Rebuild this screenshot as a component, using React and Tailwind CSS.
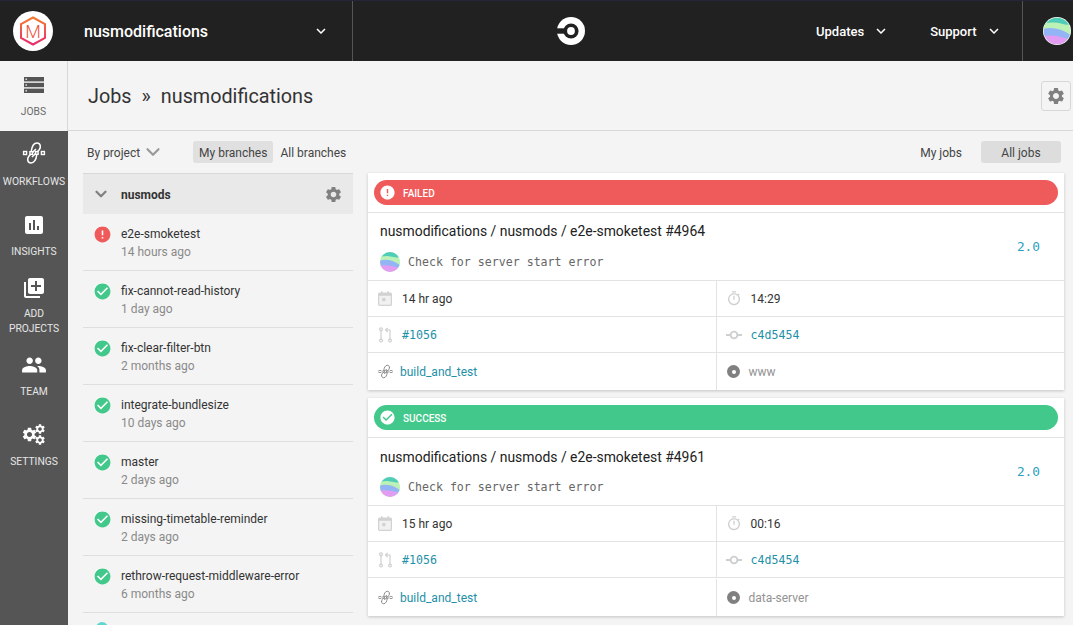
import React from "react";
import { ChevronDown } from "lucide-react";
import { MdAssessment, MdLibraryAdd, MdPeople, MdSettings, MdCheckCircle, MdError, MdKeyboardArrowDown, MdOutlineTimer } from "react-icons/md";

function Avatar({ size, id, ring }) {
  return (
    <svg width={size} height={size} viewBox="0 0 40 40" className="shrink-0">
      <defs>
        <clipPath id={id}><circle cx="20" cy="20" r={ring ? 19 : 20} /></clipPath>
      </defs>
      {ring ? <circle cx="20" cy="20" r="20" fill="#fff" /> : null}
      <g clipPath={`url(#${id})`}>
        <rect width="40" height="40" fill="#bdf2b6" />
        <rect width="40" height="11" fill="#4fcdb8" />
        <path d="M0 10 Q20 4 40 15 L40 26 Q20 16 0 20Z" fill="#bdf2b6" />
        <path d="M0 17 Q20 12 40 26 L40 34 Q20 26 0 28Z" fill="#93b4f5" />
        <path d="M0 27 Q20 24 40 33 L40 40 L0 40Z" fill="#e29df2" />
      </g>
    </svg>
  );
}

function WorkflowIcon({ size = 24, color = "#fff", bg = "#555" }) {
  return (
    <svg width={size} height={size} viewBox="0 0 24 24" fill="none" stroke={color} strokeWidth="1.6">
      <path d="M9.2 10.5 C9.8 6 11.5 2 15 2 C18.6 2 19.2 6.2 17.2 8.8 L10 16" />
      <path d="M14.8 13.5 C14.2 18 12.5 22 9 22 C5.4 22 4.8 17.8 6.8 15.2 L14 8" />
      <g fill={bg} strokeWidth="1.4">
        <rect x="1.6" y="10.5" width="3" height="3" />
        <rect x="19.4" y="10.5" width="3" height="3" />
        <rect x="7.9" y="10.7" width="2.6" height="2.6" />
        <rect x="13.5" y="10.7" width="2.6" height="2.6" />
      </g>
    </svg>
  );
}

function NavItem({ icon, label, label2, active, iconClass = "", labelClass = "mt-[7px]" }) {
  return (
    <div className={`h-[70px] flex flex-col items-center justify-center shrink-0 ${active ? "bg-[#f4f4f4] text-[#6a6a6a] border-r border-[#d8d8d8]" : "text-[#e6e6e6]"}`}>
      <div className={`h-6 flex items-center justify-center ${iconClass}`}>{icon}</div>
      <div className={`text-[10.3px] leading-[15px] text-center ${labelClass}`}>{label}{label2 ? <><br />{label2}</> : null}</div>
    </div>
  );
}

function SettingsIcon() {
  return (
    <div className="relative w-6 h-6">
      <MdSettings size={17} className="absolute left-[-1px] top-[3px] text-white" />
      <MdSettings size={12} className="absolute left-[12px] top-[0px] text-white" />
      <MdSettings size={12} className="absolute left-[12px] top-[11px] text-white" />
    </div>
  );
}

function JobsIcon() {
  return (
    <svg width="22" height="18" viewBox="0 0 22 18">
      <g fill="#555">
        <rect x="1" y="1" width="20" height="4.4" />
        <rect x="1" y="6.8" width="20" height="4.4" />
        <rect x="1" y="12.6" width="20" height="4.4" />
      </g>
      <g fill="#f4f4f4">
        <rect x="2.5" y="2.5" width="1.4" height="1.4" />
        <rect x="2.5" y="8.3" width="1.4" height="1.4" />
        <rect x="2.5" y="14.1" width="1.4" height="1.4" />
      </g>
    </svg>
  );
}

function Sidebar() {
  return (
    <div className="w-[68px] shrink-0 bg-[#555555] flex flex-col">
      <NavItem active icon={<JobsIcon />} label="JOBS" />
      <NavItem icon={<WorkflowIcon size={24} />} iconClass="-mt-[2px] mb-[2px]" label="WORKFLOWS" />
      <NavItem icon={<MdAssessment size={24} className="text-white" />} label="INSIGHTS" />
      <NavItem icon={<MdLibraryAdd size={24} className="text-white" />} label="ADD" label2="PROJECTS" labelClass="mt-[6px]" />
      <NavItem icon={<MdPeople size={26} className="text-white -ml-px" />} label="TEAM" />
      <NavItem icon={<SettingsIcon />} label="SETTINGS" />
    </div>
  );
}

function Logo() {
  return (
    <div className="w-10 h-10 rounded-full bg-white flex items-center justify-center shrink-0">
      <svg width="28" height="30" viewBox="0 0 28 30">
        <defs>
          <linearGradient id="lg" x1="0" y1="0" x2="0" y2="1">
            <stop offset="0" stopColor="#f47c30" />
            <stop offset="1" stopColor="#ea2a6a" />
          </linearGradient>
        </defs>
        <path d="M14 1.5 L26 8 V22 L14 28.5 L2 22 V8 Z" fill="none" stroke="url(#lg)" strokeWidth="2" />
        <text x="14" y="21.5" textAnchor="middle" fontFamily="Roboto" fontWeight="300" fontSize="18" fill="#f0503a">M</text>
      </svg>
    </div>
  );
}

function CircleCI() {
  return (
    <svg width="28" height="28" viewBox="0 0 28 28">
      <circle cx="14" cy="14" r="14" fill="#fff" />
      <circle cx="14" cy="14" r="7.6" fill="#212121" />
      <rect x="0" y="11.3" width="14" height="5.4" fill="#212121" />
      <circle cx="14" cy="14" r="3.9" fill="#fff" />
    </svg>
  );
}

function Header() {
  return (
    <div className="h-[61px] shrink-0 bg-[#212121] border-t border-[#26263a] flex text-white">
      <div className="w-[353px] shrink-0 flex items-center border-r border-[#555] pl-[13px] pr-[22px]">
        <Logo />
        <span className="ml-[31px] pt-px text-[16px] font-medium">nusmodifications</span>
        <MdKeyboardArrowDown size={18} className="ml-auto" />
      </div>
      <div className="w-[436px] shrink-0 flex items-center justify-center"><CircleCI /></div>
      <div className="flex-1 flex items-center text-[13px] font-medium">
        <span className="ml-[27px] pt-px">Updates</span>
        <MdKeyboardArrowDown size={18} className="ml-[8px]" />
        <span className="ml-[40px] pt-px">Support</span>
        <MdKeyboardArrowDown size={18} className="ml-[9px]" />
        <div className="ml-auto w-[51px] h-full border-l border-[#555] flex items-center pl-[20px]">
          <Avatar size={28} id="hdr" ring />
        </div>
      </div>
    </div>
  );
}

function Row({ status, name, time }) {
  return (
    <div className="h-[57px] flex border-b border-[#dedede] pl-[11px] shrink-0">
      <div className="w-[16px] h-[16px] mt-[12px] rounded-full bg-white flex items-center justify-center shrink-0">
        {status === "fail" ? <MdError size={19} className="text-[#ef5b5b] shrink-0" /> : <MdCheckCircle size={19} className="text-[#42c88a] shrink-0" />}
      </div>
      <div className="ml-[11px] pt-[11px]">
        <div className="text-[12px] leading-[18px] text-[#333]">{name}</div>
        <div className="text-[12px] leading-[18px] text-[#8a8a8a]">{time}</div>
      </div>
    </div>
  );
}

function PrIcon() {
  return (
    <svg width="13" height="16" viewBox="0 0 13 16" fill="none" stroke="#cfcfcf" strokeWidth="1.2">
      <circle cx="2" cy="2.2" r="1.4" />
      <circle cx="2" cy="13.6" r="1.4" />
      <circle cx="11" cy="13.6" r="1.4" />
      <path d="M2 3.6V12.2M11 12.2V3H7M8.6 1L6.6 3L8.6 5" />
    </svg>
  );
}

function CommitIcon() {
  return (
    <svg width="16" height="10" viewBox="0 0 16 10" fill="none" stroke="#cfcfcf" strokeWidth="1.9">
      <circle cx="8" cy="5" r="3.4" />
      <path d="M0 5h4.6M11.4 5H16" />
    </svg>
  );
}

function CalendarIcon() {
  return (
    <svg width="14" height="15" viewBox="0 0 14 15">
      <rect x="0.6" y="2.2" width="12.8" height="12.2" rx="1" fill="#f1f1f1" stroke="#d2d2d2" strokeWidth="1.2" />
      <rect x="0.6" y="2.2" width="12.8" height="2.6" fill="#d2d2d2" />
      <rect x="3" y="0.3" width="1.6" height="2.4" fill="#d2d2d2" />
      <rect x="9.4" y="0.3" width="1.6" height="2.4" fill="#d2d2d2" />
      <rect x="4.2" y="7" width="3.2" height="3.2" fill="#d2d2d2" />
    </svg>
  );
}

function Cell({ icon, children }) {
  return (
    <div className="flex-1 flex items-center h-full pl-[9px]">
      <div className="w-[16px] flex items-center justify-center shrink-0">{icon}</div>
      {children}
    </div>
  );
}

function Card({ status, num, time, dur, branchTag, id, second }) {
  const failed = status === "fail";
  return (
    <div className={`bg-white shadow-[0_1px_3px_rgba(0,0,0,0.2)] ${second ? "mt-[8px]" : ""}`}>
      <div className="h-[40px] border-b border-[#e3e3e3] px-[6px] pt-[7px]">
        <div className={`h-[25px] rounded-full flex items-center pl-[5px] text-white ${failed ? "bg-[#ef5b5b]" : "bg-[#42c88a]"}`}>
          {failed ? <MdError size={17} /> : <MdCheckCircle size={17} />}
          <span className="ml-[7px] pt-[2px] text-[10px] font-medium">{failed ? "FAILED" : "SUCCESS"}</span>
        </div>
      </div>
      <div className={`h-[68px] border-b border-[#e3e3e3] relative pl-[12px] ${second ? "pt-[9px]" : "pt-[8px]"}`}>
        <div className="text-[13.92px] leading-[20px] text-[#212121]">nusmodifications / nusmods / e2e-smoketest #{num}</div>
        <div className={`flex items-center ${second ? "mt-[10px]" : "mt-[11px]"}`}>
          <Avatar size={20} id={id} />
          <span className="ml-[8px] pt-[2px] text-[11.6px] text-[#666] font-['DejaVu_Sans_Mono',monospace]">Check for server start error</span>
        </div>
        <span className="absolute right-[24px] top-[24px] text-[12.8px] text-[#2a9fc0] font-['DejaVu_Sans_Mono',monospace]">2.0</span>
      </div>
      <div className="h-[36px] flex border-b border-[#e3e3e3]">
        <Cell icon={<CalendarIcon />}><span className="ml-[9px] text-[12px] text-[#333]">{time}</span></Cell>
        <div className="w-px bg-[#e3e3e3]" />
        <Cell icon={<MdOutlineTimer size={17} className="text-[#cfcfcf]" />}><span className="ml-[9px] text-[12px] text-[#333]">{dur}</span></Cell>
      </div>
      <div className="h-[36px] flex border-b border-[#e3e3e3]">
        <Cell icon={<PrIcon />}><span className="ml-[9px] pt-[2px] text-[11.6px] text-[#1e90a8] font-['DejaVu_Sans_Mono',monospace]">#1056</span></Cell>
        <div className="w-px bg-[#e3e3e3]" />
        <Cell icon={<CommitIcon />}><span className="ml-[9px] pt-[2px] text-[11.6px] text-[#1e90a8] font-['DejaVu_Sans_Mono',monospace]">c4d5454</span></Cell>
      </div>
      <div className={`flex ${second ? "h-[38px] pt-px" : "h-[37px]"}`}>
        <Cell icon={<WorkflowIcon size={15} color="#888" bg="#fff" />}><span className="ml-[7px] text-[12px] text-[#1e90a8]">build_and_test</span></Cell>
        <div className="w-px bg-[#e3e3e3]" />
        <Cell icon={<div className="w-[13px] h-[13px] rounded-full bg-[#808080] flex items-center justify-center"><div className="w-1 h-1 rounded-full bg-white" /></div>}>
          <span className="ml-[7px] text-[12px] text-[#929292]">{branchTag}</span>
        </Cell>
      </div>
    </div>
  );
}

export default function App() {
  return (
    <div className="w-[1073px] h-[625px] overflow-hidden flex flex-col bg-[#f4f4f4] font-['Roboto',sans-serif]">
      <Header />
      <div className="flex-1 flex min-h-0">
        <Sidebar />
        <div className="flex-1 min-w-0 flex flex-col">
          <div className="h-[70px] shrink-0 border-b border-[#d8d8d8] flex items-center pl-[20px] pr-[2px] justify-between">
            <div className="text-[19.8px] text-[#333] pt-[2px]">Jobs<span className="mx-[10px]">»</span>nusmodifications</div>
            <div className="w-[30px] h-[30px] border border-[#d8d8d8] rounded-[3px] flex items-center justify-center"><MdSettings size={20} className="text-[#808080]" /></div>
          </div>
          <div className="flex-1 min-h-0 flex pl-[15px]">
            <div className="w-[270px] shrink-0 flex flex-col">
              <div className="h-[42px] shrink-0 flex items-center text-[12px] text-[#444]">
                <span className="ml-[4px] pt-px">By project</span>
                <ChevronDown size={22} strokeWidth={2.4} className="ml-[2px] text-[#999]" />
                <span className="ml-[29px] h-[22px] pt-px px-[6px] rounded-[3px] bg-[#e0e0e0] flex items-center">My branches</span>
                <span className="ml-[7px] pt-px">All branches</span>
              </div>
              <div className="h-[41px] shrink-0 bg-[#e9e9e9] border-t border-[#d8d8d8] flex items-center pl-[9px] pr-[10px]">
                <ChevronDown size={18} strokeWidth={3} className="text-[#808080]" />
                <span className="ml-[11px] pt-px text-[12px] font-bold text-[#333]">nusmods</span>
                <MdSettings size={19} className="ml-auto text-[#808080]" />
              </div>
              <Row status="fail" name="e2e-smoketest" time="14 hours ago" />
              <Row name="fix-cannot-read-history" time="1 day ago" />
              <Row name="fix-clear-filter-btn" time="2 months ago" />
              <Row name="integrate-bundlesize" time="10 days ago" />
              <Row name="master" time="2 days ago" />
              <Row name="missing-timetable-reminder" time="2 days ago" />
              <Row name="rethrow-request-middleware-error" time="6 months ago" />
              <div className="relative h-4"><div className="absolute left-[13px] top-[9px] w-[12px] h-[12px] rounded-full bg-[#5fd6d0]" /></div>
            </div>
            <div className="ml-[15px] w-[696px] shrink-0 flex flex-col">
              <div className="h-[42px] shrink-0 flex items-center justify-end pr-[3px] text-[12px] text-[#444]">
                <span className="pt-px">My jobs</span>
                <span className="ml-[19px] w-[80px] h-[22px] pt-px rounded-[3px] bg-[#dddddd] flex items-center justify-center">All jobs</span>
              </div>
              <Card status="fail" id="a1" num="4964" time="14 hr ago" dur="14:29" branchTag="www" />
              <Card status="ok" id="a2" num="4961" time="15 hr ago" dur="00:16" branchTag="data-server" second />
            </div>
          </div>
        </div>
      </div>
    </div>
  );
}
